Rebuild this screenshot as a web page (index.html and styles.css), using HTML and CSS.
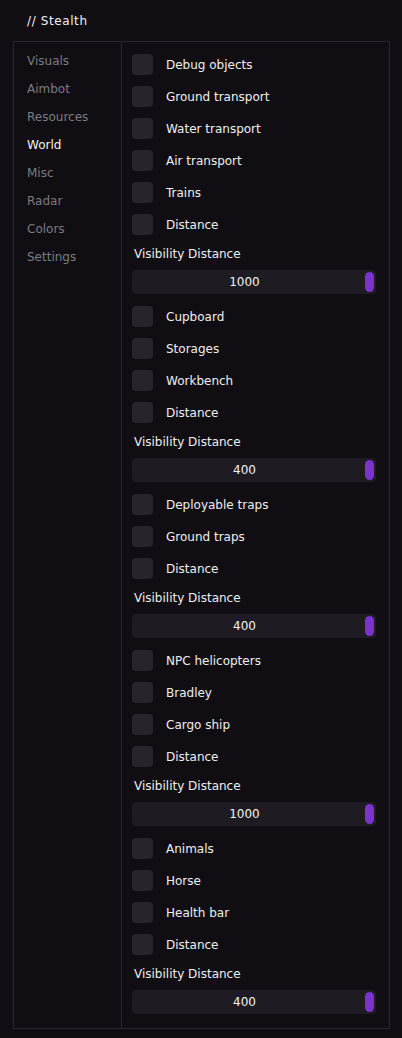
FILE: index.html
```html
<!DOCTYPE html>
<html>
<head>
<meta charset="utf-8">
<link rel="stylesheet" href="styles.css">
</head>
<body>
<div class="title">// Stealth</div>
<div class="panel">
  <nav class="sidebar">
    <div class="nav-item">Visuals</div>
    <div class="nav-item">Aimbot</div>
    <div class="nav-item">Resources</div>
    <div class="nav-item active">World</div>
    <div class="nav-item">Misc</div>
    <div class="nav-item">Radar</div>
    <div class="nav-item">Colors</div>
    <div class="nav-item">Settings</div>
  </nav>
  <main class="content">
    <div class="row"><span class="box"></span><span class="label">Debug objects</span></div>
    <div class="row"><span class="box"></span><span class="label">Ground transport</span></div>
    <div class="row"><span class="box"></span><span class="label">Water transport</span></div>
    <div class="row"><span class="box"></span><span class="label">Air transport</span></div>
    <div class="row"><span class="box"></span><span class="label">Trains</span></div>
    <div class="row"><span class="box"></span><span class="label">Distance</span></div>
    <div class="slider-label">Visibility Distance</div>
    <div class="slider"><span class="value">1000</span><span class="knob"></span></div>

    <div class="row"><span class="box"></span><span class="label">Cupboard</span></div>
    <div class="row"><span class="box"></span><span class="label">Storages</span></div>
    <div class="row"><span class="box"></span><span class="label">Workbench</span></div>
    <div class="row"><span class="box"></span><span class="label">Distance</span></div>
    <div class="slider-label">Visibility Distance</div>
    <div class="slider"><span class="value">400</span><span class="knob"></span></div>

    <div class="row"><span class="box"></span><span class="label">Deployable traps</span></div>
    <div class="row"><span class="box"></span><span class="label">Ground traps</span></div>
    <div class="row"><span class="box"></span><span class="label">Distance</span></div>
    <div class="slider-label">Visibility Distance</div>
    <div class="slider"><span class="value">400</span><span class="knob"></span></div>

    <div class="row"><span class="box"></span><span class="label">NPC helicopters</span></div>
    <div class="row"><span class="box"></span><span class="label">Bradley</span></div>
    <div class="row"><span class="box"></span><span class="label">Cargo ship</span></div>
    <div class="row"><span class="box"></span><span class="label">Distance</span></div>
    <div class="slider-label">Visibility Distance</div>
    <div class="slider"><span class="value">1000</span><span class="knob"></span></div>

    <div class="row"><span class="box"></span><span class="label">Animals</span></div>
    <div class="row"><span class="box"></span><span class="label">Horse</span></div>
    <div class="row"><span class="box"></span><span class="label">Health bar</span></div>
    <div class="row"><span class="box"></span><span class="label">Distance</span></div>
    <div class="slider-label">Visibility Distance</div>
    <div class="slider"><span class="value">400</span><span class="knob"></span></div>
  </main>
</div>
</body>
</html>
```
FILE: styles.css
```css
html, body {
  margin: 0;
  padding: 0;
  background: #110e13;
}
body {
  width: 402px;
  height: 1038px;
  overflow: hidden;
  font-family: "DejaVu Sans", sans-serif;
  font-size: 12px;
  color: #ececec;
}
.title {
  height: 41px;
  display: flex;
  align-items: center;
  padding-left: 27px;
  color: #f0f0f0;
  letter-spacing: 0.6px;
}
.panel {
  margin-left: 13px;
  width: 377px;
  height: 988px;
  box-sizing: border-box;
  border: 1px solid #2a2730;
  display: flex;
}
.sidebar {
  width: 108px;
  box-sizing: border-box;
  border-right: 1px solid #2a2730;
  padding-top: 5px;
  padding-left: 13px;
}
.nav-item {
  height: 28px;
  line-height: 28px;
  color: #7d7b80;
}
.nav-item.active {
  color: #f2f2f2;
}
.content {
  flex: 1;
  padding: 12px 13px 0 10px;
  display: flex;
  flex-direction: column;
  gap: 11px;
}
.row {
  height: 21px;
  display: flex;
  align-items: center;
}
.box {
  width: 21px;
  height: 21px;
  border-radius: 4px;
  background: #27242b;
  flex: none;
}
.label {
  margin-left: 13px;
  color: #efefef;
}
.slider-label {
  height: 14px;
  line-height: 14px;
  margin-top: 1px;
  margin-bottom: -2px;
  padding-left: 2px;
  color: #efefef;
}
.slider {
  position: relative;
  height: 24px;
  border-radius: 4px;
  background: #1e1c22;
  display: flex;
  align-items: center;
  justify-content: center;
  padding-right: 19px;
  margin-bottom: 1px;
}
.value {
  color: #f4f4f4;
}
.knob {
  position: absolute;
  right: 2px;
  top: 2px;
  width: 9px;
  height: 20px;
  border-radius: 5px;
  background: #7a33cc;
}
```
